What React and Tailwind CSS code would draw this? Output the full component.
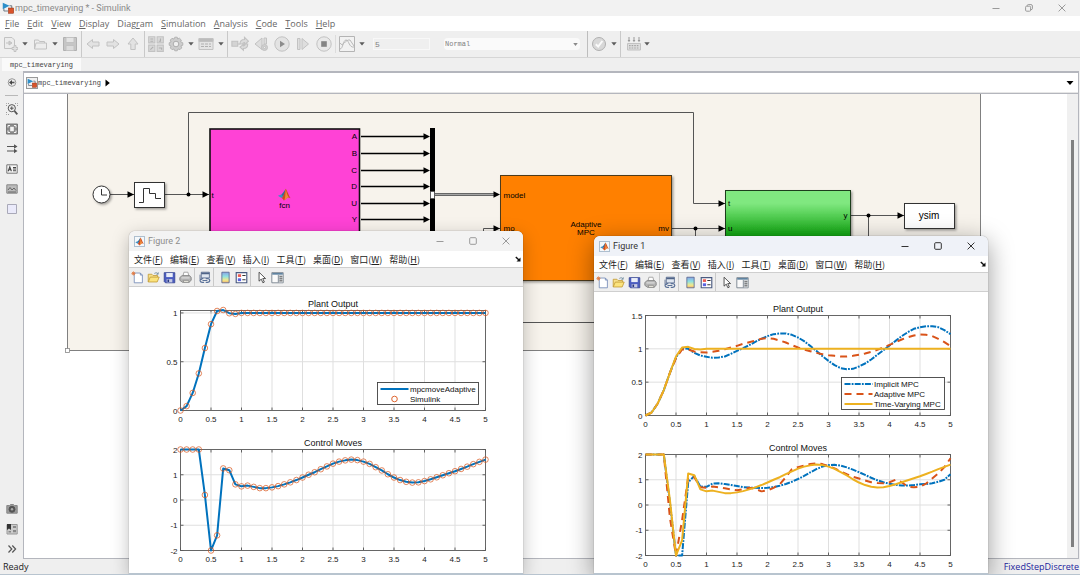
import React from "react";

const UI = "font-['Open_Sans','Noto_Sans_CJK_SC',sans-serif]";
const MONO = "font-['Liberation_Mono',monospace]";

/* ---------- small shared parts ---------- */

function Mnemonic({ text }) {
  const i = text.indexOf("_");
  return (
    <>
      {text.slice(0, i)}
      <span className="underline underline-offset-1">{text[i + 1]}</span>
      {text.slice(i + 2)}
    </>
  );
}

function Tool({ label, className = "w-5", children }) {
  return (
    <button type="button" aria-label={label} className={`flex h-full shrink-0 items-center justify-center ${className}`}>
      {children}
    </button>
  );
}

function Drop({ label }) {
  return (
    <Tool label={label} className="w-[10px]">
      <svg viewBox="0 0 6 4" className="h-[4px] w-[6px]"><path d="M0.3 0.3H5.7L3 3.6Z" fill="#5c5c5c" /></svg>
    </Tool>
  );
}

function Sep({ className = "bg-[#c9c9c9]" }) {
  return <div className={`mx-px w-px shrink-0 self-stretch ${className}`} />;
}

function Ico({ children, className = "h-4 w-4" }) {
  return (
    <svg viewBox="0 0 16 16" className={`shrink-0 ${className}`} fill="none" stroke="#c2c2c2" strokeWidth="1">
      {children}
    </svg>
  );
}

function MatlabLogo({ className }) {
  return (
    <svg viewBox="0 0 16 16" className={`shrink-0 ${className}`}>
      <MatlabShape />
    </svg>
  );
}

function MatlabShape() {
  return (
    <>
      <path d="M0.5 9.3L4.6 7.6L7 9.8L4.8 11.8Z" fill="#3f8fc0" />
      <path d="M4.6 7.6C6.5 6.6 7.4 4 9.8 0.8L8.6 7.2L6.6 10Z" fill="#2e6f9e" />
      <path d="M9.8 0.8C11.6 2.6 13 8.6 15.6 12.2C13.8 11 12.4 10.8 11 12C9.4 13.4 8.6 14.8 7.4 15C7 13.4 6.2 12.4 4.8 11.8C7.4 10.4 8.4 4.4 9.8 0.8Z" fill="#cf4a1f" />
      <path d="M9.8 0.8C10.8 3.4 10.8 8 13.4 11C11.6 11.2 10 13.6 8.2 14.6C9.8 10 9.2 5 9.8 0.8Z" fill="#ef8a3c" />
    </>
  );
}

function ModelIcon({ className }) {
  return (
    <svg viewBox="0 0 16 16" className={`shrink-0 ${className}`}>
      <path d="M1 1L10 5L1 9.500Z" fill="#2d8fc9" />
      <path d="M10 5H13V8.500M2.500 9V12H8" fill="none" stroke="#4b5563" strokeWidth="1" />
      <rect x="8.500" y="8" width="7" height="7" fill="#d9532a" stroke="#8e2f12" strokeWidth="0.700" />
    </svg>
  );
}

function WindowButtons({ color, restore, width }) {
  return (
    <div className="flex h-full">
      <button type="button" aria-label="Minimize" className={`flex items-center justify-center ${width}`}>
        <svg viewBox="0 0 8 8" className="h-2 w-2" stroke={color} fill="none"><path d="M0.5 4.5H7.5" /></svg>
      </button>
      <button type="button" aria-label={restore ? "Restore" : "Maximize"} className={`flex items-center justify-center ${width}`}>
        {restore ? (
          <svg viewBox="0 0 8 8" className="h-2 w-2" stroke={color} fill="none">
            <rect x="0.6" y="2.2" width="5" height="5" rx="1" />
            <path d="M2.3 2.2V1.4Q2.4 0.6 3.2 0.6H6Q7.4 0.6 7.4 2V4.8Q7.4 5.6 5.8 5.7" />
          </svg>
        ) : (
          <svg viewBox="0 0 8 8" className="h-2 w-2" stroke={color} fill="none"><rect x="0.7" y="0.7" width="6.6" height="6.6" rx="1" /></svg>
        )}
      </button>
      <button type="button" aria-label="Close" className={`flex items-center justify-center ${width}`}>
        <svg viewBox="0 0 8 8" className="h-2 w-2" stroke={color} fill="none"><path d="M0.6 0.6L7.4 7.4M7.4 0.6L0.6 7.4" /></svg>
      </button>
    </div>
  );
}

/* ---------- main window chrome ---------- */

const MENUS = ["_File", "_Edit", "_View", "_Display", "Diag_ram", "_Simulation", "_Analysis", "_Code", "_Tools", "_Help"];

function MainToolbar() {
  return (
    <div className="flex h-[27px] shrink-0 items-center border-b border-[#d6d6d6] bg-[#efefef]">
      <Tool label="New model">
        <Ico>
          <path d="M2.5 1.5H10L12.5 4V12.5H2.5Z" fill="#ececec" />
          <path d="M4 7H7M7 5V9L10 7Z" fill="#ccc" />
          <path d="M10 11.5H12V9.5H14V11.5H15.8V13.5H14V15.5H12V13.5H10Z" fill="#e2e2e2" />
        </Ico>
      </Tool>
      <Drop label="New options" />
      <Tool label="Open">
        <Ico><path d="M2.5 13V4H6.500L7.500 5.500H12.500V7M2.500 13L4 7H14.500V13Z" fill="#ededed" /></Ico>
      </Tool>
      <Drop label="Open options" />
      <Tool label="Save">
        <Ico><path d="M1.5 1.5H14.5V14.5H1.5Z" fill="#c6c6c6" stroke="#b0b0b0" /><path d="M4 1.5H12V6.5H4Z" fill="#e4e4e4" /><path d="M4 9.5H12V14.5H4Z" fill="#dcdcdc" /></Ico>
      </Tool>
      <Sep />
      <Tool label="Back"><Ico><path d="M2 8L7.5 3.5V6H14V10H7.5V12.5Z" fill="#e2e2e2" /></Ico></Tool>
      <Tool label="Forward"><Ico><path d="M14 8L8.5 3.5V6H2V10H8.5V12.5Z" fill="#e2e2e2" /></Ico></Tool>
      <Tool label="Up"><Ico><path d="M8 2L13 8H10.2V13.5H5.8V8H3Z" fill="#e2e2e2" /></Ico></Tool>
      <Sep />
      <Tool label="Library browser">
        <Ico className="h-[18px] w-[18px]">
          <path d="M1.5 1.5H7V7H1.5ZM9 1.5H14.5V7H9ZM1.5 9H7V14.5H1.5ZM9 9H14.5V14.5H9Z" fill="#d8d8d8" />
          <path d="M3 3.500H5.500M3 5.500H5.500M12 3V5.500H10.500M3 13L5.500 10.500M10.500 11.500H13V13" stroke="#b0b0b0" />
        </Ico>
      </Tool>
      <Tool label="Model configuration">
        <Ico>
          <path d="M6.8 1.2H9.2L9.7 3L11.4 2.2L13.3 4L12.6 5.9L14.8 6.8V9.2L12.9 9.9L13.7 11.9L12 13.6L10 12.9L9.2 14.8H6.8L6 12.9L4.1 13.7L2.3 11.9L3.1 10L1.2 9.2V6.8L3.1 6L2.3 4.1L4 2.3L6 3.1Z" fill="#cdcdcd" stroke="#b4b4b4" />
          <circle cx="8" cy="8" r="2.8" fill="#efefef" stroke="#acacac" />
        </Ico>
      </Tool>
      <Drop label="Configuration options" />
      <Tool label="Model explorer">
        <Ico><path d="M1 2.5H15V13.5H1Z" fill="#e4e4e4" /><path d="M1 2.5H15V5.5H1Z" fill="#bcbcbc" /><path d="M3 8H13M3 10.5H13" strokeDasharray="3 1" stroke="#b0b0b0" /></Ico>
      </Tool>
      <Drop label="Explorer options" />
      <Sep />
      <Tool label="Update diagram" className="w-[21px]">
        <Ico className="h-[18px] w-[18px]"><path d="M0.8 5.5H6V10H0.8Z" fill="#d4d4d4" /><path d="M6 8H8" /><path d="M8 8Q8 4 12 4V2L15.5 5.5L12 8.5V6.8Q10.5 6.8 10.3 8ZM14.8 8Q15 12 11 12V13.5L8 10.8L11 8.5V9.8Q12.5 9.8 12.8 8Z" fill="#dcdcdc" /></Ico>
      </Tool>
      <Tool label="Step back" className="w-[21px]">
        <Ico><path d="M9 2L2 8L9 13.5Z" fill="#dedede" /><path d="M11 2H13.5V8H11Z" fill="#dedede" /><circle cx="11.5" cy="11.5" r="3" fill="#d0d0d0" /><circle cx="11.5" cy="11.5" r="1" fill="#efefef" /></Ico>
      </Tool>
      <Tool label="Run" className="w-[21px]">
        <Ico><circle cx="8" cy="8" r="7.2" fill="#e3e3e3" /><path d="M6 4.8L11 8L6 11.2Z" fill="#8c8c8c" stroke="none" /></Ico>
      </Tool>
      <Tool label="Step forward" className="w-[21px]">
        <Ico><path d="M2.5 2.5H5V13.5H2.5ZM7 2.5L13.5 8L7 13.5Z" fill="#dedede" /></Ico>
      </Tool>
      <Tool label="Stop" className="w-[21px]">
        <Ico><circle cx="8" cy="8" r="7.2" fill="#e9e9e9" /><path d="M5.2 5.2H10.8V10.8H5.2Z" fill="#858585" stroke="none" /></Ico>
      </Tool>
      <Sep className="my-1 bg-[#dcdcdc]" />
      <Tool label="Data inspector">
        <Ico><path d="M0.5 0.5H15.5V15.5H0.5Z" fill="#f2f2f2" stroke="#b4b4b4" /><path d="M1 13C4 13 4 4 7 4C10 4 10 12 15 11M1 7C4 12 6 3 11 4L15 10" stroke="#b8b8b8" /></Ico>
      </Tool>
      <Drop label="Inspector options" />
      <input
        aria-label="Simulation stop time"
        defaultValue="5"
        className={`ml-[6px] h-3 w-[57px] border border-[#f8f8f8] bg-[#efefef] px-px text-[8px] leading-none text-[#808080] ${MONO}`}
      />
      <div className="ml-[14px] grid h-3 w-[136px] items-center rounded-sm bg-[#fafafa]">
        <select
          aria-label="Simulation mode"
          className={`col-start-1 row-start-1 h-3 w-full appearance-none bg-transparent px-px text-[7px] leading-3 text-[#808080] ${MONO}`}
        >
          <option>Normal</option>
        </select>
        <svg viewBox="0 0 6 4" className="pointer-events-none col-start-1 row-start-1 mr-[2px] h-[3px] w-[5px] justify-self-end"><path d="M0 0H6L3 4Z" fill="#8a8a8a" /></svg>
      </div>
      <div className="w-[6px] shrink-0" />
      <Sep className="bg-[#bdbdbd]" />
      <Tool label="Model advisor">
        <Ico><circle cx="8" cy="8" r="6.5" fill="#d8d8d8" stroke="#b0b0b0" /><path d="M4.8 8.2L7.2 10.6L11.4 5" stroke="#fafafa" strokeWidth="2" /></Ico>
      </Tool>
      <Drop label="Advisor options" />
      <Sep />
      <div className="w-1 shrink-0" />
      <Tool label="Build model" className="w-4">
        <Ico>
          <path d="M3 1V5M8 1V5M13 1V5" stroke="#999" />
          <path d="M1.6 4H4.4L3 6.2ZM6.6 4H9.4L8 6.2ZM11.6 4H14.4L13 6.2Z" fill="#999" stroke="none" />
          <path d="M1.5 7.5H14.5V14H1.5Z" fill="#dedede" />
          <path d="M3 9.7H13M3 12H13" strokeDasharray="1.6 1" stroke="#a5a5a5" strokeWidth="1.2" />
        </Ico>
      </Tool>
      <Drop label="Build options" />
    </div>
  );
}

function RailButton({ label, children }) {
  return (
    <button type="button" aria-label={label} className="flex h-5 w-full shrink-0 items-center justify-center">
      <svg viewBox="0 0 12 12" className="h-3 w-3" fill="none" stroke="#555" strokeWidth="1">{children}</svg>
    </button>
  );
}

function Rail() {
  return (
    <div className="flex w-[23px] shrink-0 flex-col pt-[2px]">
      <RailButton label="Hide browser"><circle cx="6" cy="5.5" r="3.8" stroke="#999" /><path d="M8.5 5.5H5.5" strokeWidth="1.6" /><path d="M6 3L3 5.5L6 8Z" fill="#444" stroke="none" /></RailButton>
      <div className="mx-[5px] mt-[2px] mb-[3px] h-px shrink-0 bg-[#b8b8b8]" />
      <RailButton label="Zoom"><path d="M0.5 3V0.5H3M9 0.5H11.5V3M0.5 9V11.5H3" stroke="#999" strokeDasharray="1 1" /><circle cx="5.8" cy="5.2" r="3.6" fill="#eee" /><path d="M5.8 3.4V7M4 5.2H7.6" /><path d="M8.5 8L11.3 11.3" strokeWidth="1.8" /></RailButton>
      <RailButton label="Fit to view"><path d="M0.5 1H11.5V11H0.5Z" fill="#8a8a8a" stroke="#777" /><path d="M4.2 3.800H7.800V8.200H4.200Z" fill="#f3f3f3" stroke="none" /><path d="M2 4.500V2.500H4M8 2.500H10V4.500M2 7.500V9.500H4M8 9.500H10V7.500" stroke="#f3f3f3" /></RailButton>
      <RailButton label="Sample time"><path d="M1 3.5H10M1 8H10" strokeWidth="1.2" /><path d="M8 1.2L11.5 3.5L8 5.7ZM8 5.8L11.5 8L8 10.3Z" fill="#555" stroke="none" /></RailButton>
      <RailButton label="Annotation"><path d="M0.8 1.8H11.2V10.2H0.8Z" fill="#f6f6f6" stroke="#777" /><path d="M2.2 8.2L3.8 3.8L5.4 8.2M2.8 6.8H4.8M7 4.5H10M7 6H10M7 7.8H10" strokeWidth="1.1" stroke="#444" /></RailButton>
      <RailButton label="Image"><path d="M0.8 1.8H11.2V10.2H0.8Z" fill="#bbb" stroke="#888" /><path d="M2 7L4 4.5L6 7L8 5L10 7.5M2 9H10" stroke="#666" /></RailButton>
      <RailButton label="Area"><path d="M1.5 1.5H10.5V10.5H1.5Z" fill="#eaeafa" stroke="#a9a9b8" /></RailButton>
      <div className="grow" />
      <RailButton label="Screenshot"><path d="M0.8 2.5H3.5L4.5 1.5H7.5L8.5 2.5H11.2V10.2H0.8Z" fill="#9a9a9a" stroke="#888" /><circle cx="6" cy="6.3" r="3" fill="#555" /><circle cx="6" cy="6.3" r="1.2" fill="#aaa" stroke="none" /></RailButton>
      <RailButton label="Library"><path d="M1 1.5H11.2V11H1Z" fill="#ccc" stroke="#999" /><path d="M1 1H5V7L3 5.5L1 7Z" fill="#333" stroke="none" /><path d="M7 3H10V5H7ZM7 7H10V9.3H7ZM2.5 8H5V9.5H2.5Z" fill="#888" stroke="none" /></RailButton>
      <RailButton label="More"><path d="M2.5 2.5L5.8 6L2.5 9.5M6.3 2.5L9.6 6L6.3 9.5" strokeWidth="1.2" /></RailButton>
    </div>
  );
}

/* ---------- block diagram ---------- */

function Arrow({ x, y }) {
  return <path d={`M${x} ${y}l-6.5 -3.2v6.4Z`} fill="#000" />;
}

const OUTS = [["A", 136], ["B", 153], ["C", 170], ["D", 186], ["U", 203], ["Y", 219]];

function Diagram() {
  return (
    <svg viewBox="24 94 1044 464" className="h-[464px] w-[1044px] shrink-0 font-['Liberation_Sans',sans-serif] text-[8px]" role="img" aria-label="Model diagram">
      <defs>
        <linearGradient id="plant" x1="0" y1="0" x2="0" y2="1">
          <stop offset="0.2" stopColor="#80e880" />
          <stop offset="0.7" stopColor="#14a814" />
          <stop offset="1" stopColor="#0c9c0c" />
        </linearGradient>
        <filter id="soft" x="-10%" y="-10%" width="125%" height="125%">
          <feDropShadow dx="1.5" dy="1.5" stdDeviation="1" floodOpacity="0.35" />
        </filter>
      </defs>
      <path d="M67.5 80H980.5V350.5H67.5Z" fill="#f7f3ec" stroke="#808080" />
      <rect x="65.5" y="348.5" width="4" height="4" fill="#fff" stroke="#888" strokeWidth="0.8" />

      <g fill="none" stroke="#555">
        <path d="M110 194.5H134M165 194.5H209M188.5 194.5V112.5H693.5V203.5H725" />
        <path d="M483.5 322.5V228.5H500M483.5 322.5H868.5M672 228.5H725M695.5 228.5V290M850 215.5H904M868.5 215.5V322.5" />
      </g>
      <circle cx="188.5" cy="194.5" r="2" /><circle cx="695.5" cy="228.5" r="2" /><circle cx="868.5" cy="215.5" r="2" />
      <Arrow x={134} y={194.5} /><Arrow x={209} y={194.5} /><Arrow x={725} y={203.5} />
      <Arrow x={725} y={228.5} /><Arrow x={904} y={215.5} /><Arrow x={500} y={228.5} />

      <g filter="url(#soft)">
        <circle cx="101.5" cy="194.5" r="8.5" fill="#fff" stroke="#333" />
        <rect x="134.5" y="182.5" width="30" height="25" fill="#fff" stroke="#333" />
        <rect x="500.5" y="175.5" width="171" height="105" fill="#ff8000" stroke="#4d3a1e" />
        <rect x="725.5" y="190.5" width="125" height="63" fill="url(#plant)" stroke="#1e3d1e" />
        <rect x="904.5" y="203.5" width="50" height="25" fill="#fff" stroke="#333" />
      </g>
      <path d="M101.5 189V195H107" fill="none" stroke="#333" />
      <path d="M139 202.5H143.5V188.5H149.5V193.5H155.5V198.5H161" fill="none" stroke="#333" />

      <rect x="210" y="129" width="149.500" height="140" fill="#ff42d6" stroke="#111" strokeWidth="1.600" />
      <g transform="translate(277.5 188) scale(0.84)"><MatlabShape /></g>
      <text x="284.5" y="208" textAnchor="middle">fcn</text>
      <text x="211.5" y="198">t</text>
      {OUTS.map(([name, y]) => (
        <g key={name}>
          <text x="357" y={y + 3} textAnchor="end">{name}</text>
          <path d={`M361 ${y + 0.5}H426`} stroke="#000" strokeWidth="1.6" />
          <Arrow x={430} y={y + 0.5} />
        </g>
      ))}
      <rect x="430" y="128" width="5" height="130" fill="#000" />
      <rect x="430.5" y="191.5" width="4" height="7" fill="#fff" stroke="#444" strokeWidth="0.6" />
      <path d="M435 194.5H496" stroke="#666" strokeWidth="3.2" />
      <path d="M435 194.5H496" stroke="#a5a5a5" strokeWidth="1.2" />
      <Arrow x={500} y={194.5} />

      <text x="503.5" y="198">model</text>
      <text x="503.5" y="231">mo</text>
      <text x="669" y="231" textAnchor="end">mv</text>
      <text x="586" y="227" textAnchor="middle">Adaptive</text>
      <text x="586" y="235" textAnchor="middle">MPC</text>
      <text x="728" y="206">t</text>
      <text x="728" y="231">u</text>
      <text x="847.5" y="218" textAnchor="end">y</text>
      <text x="929" y="219" textAnchor="middle" className="text-[10px]">ysim</text>
    </svg>
  );
}

/* ---------- figure data ---------- */

const settle = (head) => head.concat(Array(51 - head.length).fill(1));
const PLANT = settle([0, 0.045, 0.18, 0.38, 0.64, 0.885, 1.02, 1.03, 0.997, 0.99]);
const MOVES = [
  2, 2, 2, 2, 0.2, -2, -1.4, 1.25, 1.18, 0.62, 0.54, 0.57, 0.52, 0.47, 0.47, 0.5, 0.55, 0.62, 0.7, 0.79, 0.89, 1.0, 1.1, 1.22, 1.33,
  1.44, 1.52, 1.57, 1.6, 1.58, 1.52, 1.43, 1.3, 1.17, 1.02, 0.89, 0.79, 0.72, 0.69, 0.7, 0.75, 0.82, 0.9, 0.98, 1.06, 1.14, 1.23,
  1.32, 1.42, 1.51, 1.6,
];
const PLANT_IMPLICIT = [
  0, 0.045, 0.18, 0.38, 0.64, 0.87, 1.01, 1.0, 0.94, 0.9, 0.88, 0.865, 0.87, 0.885, 0.925, 0.97, 1.01, 1.055, 1.105, 1.15, 1.19,
  1.22, 1.23, 1.23, 1.21, 1.17, 1.115, 1.045, 0.97, 0.89, 0.82, 0.755, 0.71, 0.695, 0.7, 0.735, 0.78, 0.84, 0.91, 0.98, 1.05, 1.12,
  1.19, 1.25, 1.3, 1.325, 1.34, 1.34, 1.325, 1.28, 1.22,
];
const PLANT_ADAPTIVE = [
  0, 0.045, 0.18, 0.38, 0.64, 0.86, 0.99, 0.99, 0.96, 0.95, 0.945, 0.955, 0.97, 0.995, 1.02, 1.045, 1.075, 1.1, 1.125, 1.15, 1.16,
  1.15, 1.125, 1.095, 1.055, 1.02, 0.99, 0.965, 0.94, 0.92, 0.905, 0.895, 0.885, 0.885, 0.895, 0.91, 0.93, 0.955, 0.985, 1.02, 1.06,
  1.1, 1.14, 1.175, 1.2, 1.215, 1.21, 1.19, 1.15, 1.1, 1.04,
];
const MOVES_IMPLICIT = [
  2, 2, 2, 2, 0.1, -2, -2, 0.9, 1.15, 0.73, 0.72, 0.85, 0.86, 0.83, 0.79, 0.75, 0.71, 0.69, 0.68, 0.67, 0.68, 0.71, 0.76, 0.83, 0.92,
  1.03, 1.15, 1.29, 1.42, 1.52, 1.58, 1.59, 1.56, 1.49, 1.4, 1.3, 1.19, 1.08, 0.98, 0.9, 0.84, 0.8, 0.77, 0.77, 0.79, 0.82, 0.83,
  0.86, 0.92, 1.0, 1.22,
];
const MOVES_ADAPTIVE = [
  2, 2, 2, 2, -0.5, -2, -0.6, 1.1, 1.1, 0.7, 0.68, 0.73, 0.7, 0.66, 0.62, 0.58, 0.62, 0.68, 0.64, 0.54, 0.58, 0.68, 0.82, 1.1, 1.42,
  1.5, 1.56, 1.62, 1.65, 1.62, 1.54, 1.45, 1.33, 1.22, 1.12, 1.05, 0.97, 0.9, 0.87, 0.86, 0.9, 1.0, 0.9, 0.73, 0.7, 0.72, 0.85,
  1.05, 1.25, 1.5, 1.85,
];

const BLUE = "#0072bd";
const RED = "#d95319";
const GOLD = "#edb120";
const DASHDOT = "6 1.2 1.8 1.2";
const DASH = "7 5";

/* ---------- axes ---------- */

const X0 = 51.5;
const XW = 305;

function Axes({ title, top, height, min, max, ticks, series, children }) {
  const px = (t) => X0 + (t / 5) * XW;
  const py = (v) => top + ((max - v) / (max - min)) * height;
  const bottom = top + height;
  const xs = Array.from({ length: 11 }, (_, i) => i / 2);
  return (
    <g>
      <text x={X0 + XW / 2} y={top - 4} textAnchor="middle" fill="#111" className="text-[9px]">{title}</text>
      {xs.map((t) => (
        <g key={t}>
          <path d={`M${px(t)} ${top}V${bottom}`} stroke="#dfdfdf" />
          <path d={`M${px(t)} ${top}v3M${px(t)} ${bottom}v-3`} stroke="#404040" strokeWidth="0.8" />
          <text x={px(t)} y={bottom + 11} textAnchor="middle" fill="#222">{t}</text>
        </g>
      ))}
      {ticks.map((v) => (
        <g key={v}>
          <path d={`M${X0} ${py(v)}h${XW}`} stroke="#dfdfdf" />
          <path d={`M${X0} ${py(v)}h3M${X0 + XW} ${py(v)}h-3`} stroke="#404040" strokeWidth="0.8" />
          <text x={X0 - 3} y={py(v) + 3} textAnchor="end" fill="#222">{v}</text>
        </g>
      ))}
      <rect x={X0} y={top} width={XW} height={height} fill="none" stroke="#5a5a5a" strokeWidth="0.9" />
      {series.map((s) => (
        <React.Fragment key={s.name}>
          {s.marker
            ? s.data.map((v, i) => <circle key={i} cx={px(i / 10)} cy={py(v)} r="2.8" fill="none" stroke={s.color} strokeWidth="0.7" />)
            : <polyline points={s.data.map((v, i) => `${px(i / 10)},${py(v)}`).join(" ")} fill="none" stroke={s.color} strokeWidth="2" strokeDasharray={s.dash} strokeLinejoin="round" />}
        </React.Fragment>
      ))}
      {children}
    </g>
  );
}

function Legend({ x, y, width, height, textX, items }) {
  return (
    <g>
      <rect x={x} y={y} width={width} height={height} fill="#fff" stroke="#404040" strokeWidth="0.9" />
      {items.map((s, i) => {
        const cy = y + 6.5 + i * 10;
        return (
          <g key={s.name}>
            {s.marker
              ? <circle cx={x + 17} cy={cy} r="2.8" fill="none" stroke={s.color} strokeWidth="0.9" />
              : <path d={`M${x + 3} ${cy}H${x + 31}`} stroke={s.color} strokeWidth="2" strokeDasharray={s.dash} />}
            <text x={textX} y={cy + 3} fill="#111">{s.name}</text>
          </g>
        );
      })}
    </g>
  );
}

const PLOT = "h-[288px] w-[394px] shrink-0 font-['Liberation_Sans',sans-serif] text-[8px]";

function ComparisonPlot() {
  const a = { name: "mpcmoveAdaptive", color: BLUE };
  const b = { name: "Simulink", color: RED, marker: true };
  return (
    <svg viewBox="0 56 394 288" className={PLOT} role="img" aria-label="Plant output and control moves">
      <Axes title="Plant Output" top={79.5} height={100} min={0} max={1.025} ticks={[0, 0.5, 1]} series={[{ ...a, data: PLANT }, { ...b, data: PLANT }]}>
        <Legend x={248.5} y={151.5} width={101} height={22} textX={281} items={[a, b]} />
      </Axes>
      <Axes title="Control Moves" top={218.5} height={101} min={-2} max={2} ticks={[-2, -1, 0, 1, 2]} series={[{ ...a, data: MOVES }, { ...b, data: MOVES }]} />
    </svg>
  );
}

function ControllerPlot() {
  const i = { name: "Implicit MPC", color: BLUE, dash: DASHDOT };
  const a = { name: "Adaptive MPC", color: RED, dash: DASH };
  const t = { name: "Time-Varying MPC", color: GOLD };
  return (
    <svg viewBox="0 56 394 288" className={PLOT} role="img" aria-label="Controller comparison">
      <Axes title="Plant Output" top={79.5} height={100} min={0} max={1.5} ticks={[0, 0.5, 1, 1.5]} series={[{ ...i, data: PLANT_IMPLICIT }, { ...a, data: PLANT_ADAPTIVE }, { ...t, data: PLANT }]}>
        <Legend x={247.5} y={141.5} width={103} height={32} textX={280} items={[i, a, t]} />
      </Axes>
      <Axes title="Control Moves" top={218.5} height={101} min={-2} max={2} ticks={[-2, -1, 0, 1, 2]} series={[{ ...i, data: MOVES_IMPLICIT }, { ...a, data: MOVES_ADAPTIVE }, { ...t, data: MOVES }]} />
    </svg>
  );
}

/* ---------- figure window ---------- */

const FIG_MENUS = ["文件(_F)", "编辑(_E)", "查看(_V)", "插入(_I)", "工具(_T)", "桌面(_D)", "窗口(_W)", "帮助(_H)"];

function FigTool({ label, children }) {
  return (
    <Tool label={label} className="w-4">
      <svg viewBox="0 0 16 16" className="h-[13px] w-[13px]" fill="none" strokeWidth="1">{children}</svg>
    </Tool>
  );
}

function FigureToolbar({ id }) {
  return (
    <div className="flex h-5 shrink-0 items-center border-y border-[#cfcfcf] bg-[#efefef]">
      <FigTool label="New figure"><path d="M4 2.5H11.5L14 5V14.5H4Z" fill="#fff" stroke="#6f86b5" /><path d="M11.5 2.5V5H14" stroke="#6f86b5" /><path d="M3 0.5V5.5M0.5 3H5.5M1.2 1.2L4.8 4.8M4.8 1.2L1.2 4.8" stroke="#e0763c" /></FigTool>
      <FigTool label="Open"><path d="M1.5 13.5V4H6L7.5 5.5H13V8" fill="#f7e08a" stroke="#c29a34" /><path d="M1.5 13.5L4 7.5H15L12.5 13.5Z" fill="#fbe37d" stroke="#c29a34" /><path d="M9 3Q11.5 0.8 13.5 3.5M13.8 1.5V4H11.5" stroke="#6d8a9e" /></FigTool>
      <FigTool label="Save"><path d="M1.5 2H14.5V14.5H3L1.5 13Z" fill="#4a5cc0" stroke="#34438f" /><path d="M4 2.5H12V7.5H4Z" fill="#e9edf8" /><path d="M4.5 10H11.5V14H4.5Z" fill="#c6cbe4" /><path d="M5.5 10.5H7.5V13.5H5.5Z" fill="#27357f" /></FigTool>
      <FigTool label="Print"><path d="M5 6L6 1.5H11L12 6" fill="#fff" stroke="#999" /><path d="M1 8L4 5.5H13L15 8V11.5L12 14H4.5L1 11.5Z" fill="#b4b4b4" stroke="#808080" /><path d="M3 8.500H13" stroke="#eee" /><path d="M5 11.500H11.500L12.500 14H6Z" fill="#eceadf" stroke="#8a8a8a" /></FigTool>
      <Sep />
      <FigTool label="Link plot"><path d="M4 1.5H14V8.5H4Z" fill="#dfe6f0" stroke="#4f6387" /><path d="M4 3H14" stroke="#4f6387" strokeWidth="2" /><path d="M2.5 4.5V10.5H5" stroke="#4f6387" /><path d="M6.5 9.5H5Q2.5 9.7 2.5 11.7T5 14H7.5M9.5 9.5H12Q14.5 9.7 14.5 11.7T12 14H9.5M5.5 11.7H11.5" stroke="#5b7299" strokeWidth="1.5" /></FigTool>
      <Sep />
      <div className="w-[2px] shrink-0" />
      <FigTool label="Insert colorbar">
        <defs><linearGradient id={`bar${id}`} x1="0" y1="0" x2="0" y2="1"><stop offset="0" stopColor="#8aa4e6" /><stop offset="0.4" stopColor="#8fe0e0" /><stop offset="0.75" stopColor="#f3ea8a" /><stop offset="1" stopColor="#f0b070" /></linearGradient></defs>
        <path d="M3.5 1.5H12.5V14.5H3.5Z" fill={`url(#bar${id})`} stroke="#55648c" />
      </FigTool>
      <FigTool label="Insert legend"><path d="M1.5 2H14.5V14.5H1.5Z" fill="#fff" stroke="#4a5a80" strokeWidth="1.4" /><path d="M3.5 4H7.5V7.3H3.5Z" fill="#ec5a50" /><path d="M3.5 9H7.5V12.5H3.5Z" fill="#5a63e0" /><path d="M9 5.5H13M9 10.7H13" stroke="#333" strokeWidth="1.4" /></FigTool>
      <Sep />
      <div className="w-px shrink-0" />
      <FigTool label="Edit plot"><path d="M5 1.5V12.5L7.7 10L9.7 14.5L11.5 13.6L9.5 9.3H13Z" fill="#fff" stroke="#333" /></FigTool>
      <FigTool label="Property inspector"><path d="M1 2H15V14.5H1Z" fill="#fafafa" stroke="#6b7884" /><path d="M1.5 2.5H14.5V4.5H1.5Z" fill="#5a7f9d" /><path d="M9.5 5V14H14.5V5Z" fill="#c9cdd0" /><path d="M10.5 7H14M10.5 9.5H14M10.5 12H14" stroke="#555" /><path d="M9 5V14" stroke="#6b7884" /></FigTool>
    </div>
  );
}

function FigureWindow({ id, title, active, place, children }) {
  return (
    <section
      aria-label={title}
      className={`absolute bottom-0 flex w-[394px] flex-col overflow-hidden rounded-t-md border-b border-[#b8c4cf] bg-white ${place} ${
        active ? "shadow-[0_6px_26px_rgba(0,0,0,0.4),0_0_1px_rgba(0,0,0,0.6)]" : "shadow-[0_5px_18px_rgba(0,0,0,0.25),0_0_1px_rgba(0,0,0,0.6)]"
      }`}
    >
      <header className={`flex h-5 shrink-0 items-center pr-px ${active ? "bg-[#eff2f8]" : "bg-[#f3f3f3]"}`}>
        <span className="ml-[5px] flex h-[11px] w-[11px] items-center justify-center border border-[#aebfcf] bg-[#f4f8fb]">
          <MatlabLogo className="h-[9px] w-[9px]" />
        </span>
        <h2 className={`ml-[3px] grow font-['Roboto',sans-serif] text-[9px] leading-none ${active ? "text-[#333]" : "text-[#8c8c8c]"}`}>{title}</h2>
        <WindowButtons color={active ? "#333" : "#9a9a9a"} width="w-[33px]" />
      </header>
      <nav className="flex h-4 shrink-0 items-center gap-[7px] pl-[5px] pr-[2px] font-['Noto_Sans_CJK_SC',sans-serif] text-[9px] leading-none text-[#222]">
        {FIG_MENUS.map((m) => (
          <button type="button" key={m} className="whitespace-nowrap"><Mnemonic text={m} /></button>
        ))}
        <button type="button" aria-label="Dock figure" className="ml-auto">
          <svg viewBox="0 0 6 6" className="h-[6px] w-[6px]"><path d="M0.8 1L4 4" stroke="#111" strokeWidth="1.5" /><path d="M5.5 1.5V5.5H1.5Z" fill="#111" /></svg>
        </button>
      </nav>
      <FigureToolbar id={id} />
      <div className="min-h-0 grow overflow-hidden">{children}</div>
    </section>
  );
}

/* ---------- page ---------- */

export default function App() {
  return (
    <main className={`relative flex h-screen flex-col overflow-hidden border-b border-[#b8c4cf] bg-[#efefef] ${UI}`}>
      <header className="flex h-4 shrink-0 items-center bg-[#f2f2f2] pl-[2px] pr-[2px]">
        <ModelIcon className="h-3 w-3" />
        <h1 className="ml-px grow font-['Roboto',sans-serif] text-[9px] leading-none text-[#8a8a8a]">mpc_timevarying * - Simulink</h1>
        <WindowButtons color="#9a9a9a" restore width="w-[33px]" />
      </header>

      <nav className="flex h-[15px] shrink-0 items-center gap-2 bg-white pl-[5px] text-[9px] leading-none text-[#666]">
        {MENUS.map((m) => (
          <button type="button" key={m}><Mnemonic text={m} /></button>
        ))}
      </nav>

      <MainToolbar />

      <div className="flex h-[13px] shrink-0 items-stretch pl-[2px]">
        <button type="button" className={`bg-[#fafafa] px-2 pt-[2px] text-[7px] leading-none text-[#444] ${MONO}`}>mpc_timevarying</button>
      </div>

      <div className="flex min-h-0 grow">
        <Rail />
        <div className="mr-px flex min-w-0 grow flex-col border border-t-2 border-[#b4b6bd] bg-white">
          <div className="flex h-5 shrink-0 items-center border-b border-[#e6e6e6] pl-[2px] pr-1">
            <span className="flex h-3 w-3 items-center justify-center border border-[#999] bg-[#f1f1f1]"><ModelIcon className="h-[10px] w-[10px]" /></span>
            <span className={`pt-px text-[7px] leading-none text-[#444] ${MONO}`}>mpc_timevarying</span>
            <svg viewBox="0 0 5 8" className="ml-1 h-2 w-[5px]"><path d="M0.5 0.5L4.8 4L0.5 7.5Z" /></svg>
            <button type="button" aria-label="Path history" className="ml-auto">
              <svg viewBox="0 0 8 4" className="h-1 w-2"><path d="M0.5 0H7.5L4 4Z" /></svg>
            </button>
          </div>
          <div className="flex min-h-0 grow border-t border-[#b4b6bd]">
            <div className="min-w-0 grow overflow-hidden"><Diagram /></div>
            <div className="flex w-[11px] shrink-0 justify-center bg-[#f0f0f0] pt-[46px] pb-[11px]">
              <div className="w-[3px] bg-[#808080]" />
            </div>
          </div>
        </div>
      </div>

      <footer className="flex h-[15px] shrink-0 items-center justify-between pl-[3px] pr-px text-[9px] leading-none">
        <span className="text-[#222]">Ready</span>
        <span className="text-[#1c1c9c]">FixedStepDiscrete</span>
      </footer>

      <FigureWindow id="2" title="Figure 2" place="left-[129px] top-[231px]"><ComparisonPlot /></FigureWindow>
      <FigureWindow id="1" title="Figure 1" active place="left-[594px] top-[236px]"><ControllerPlot /></FigureWindow>
    </main>
  );
}
